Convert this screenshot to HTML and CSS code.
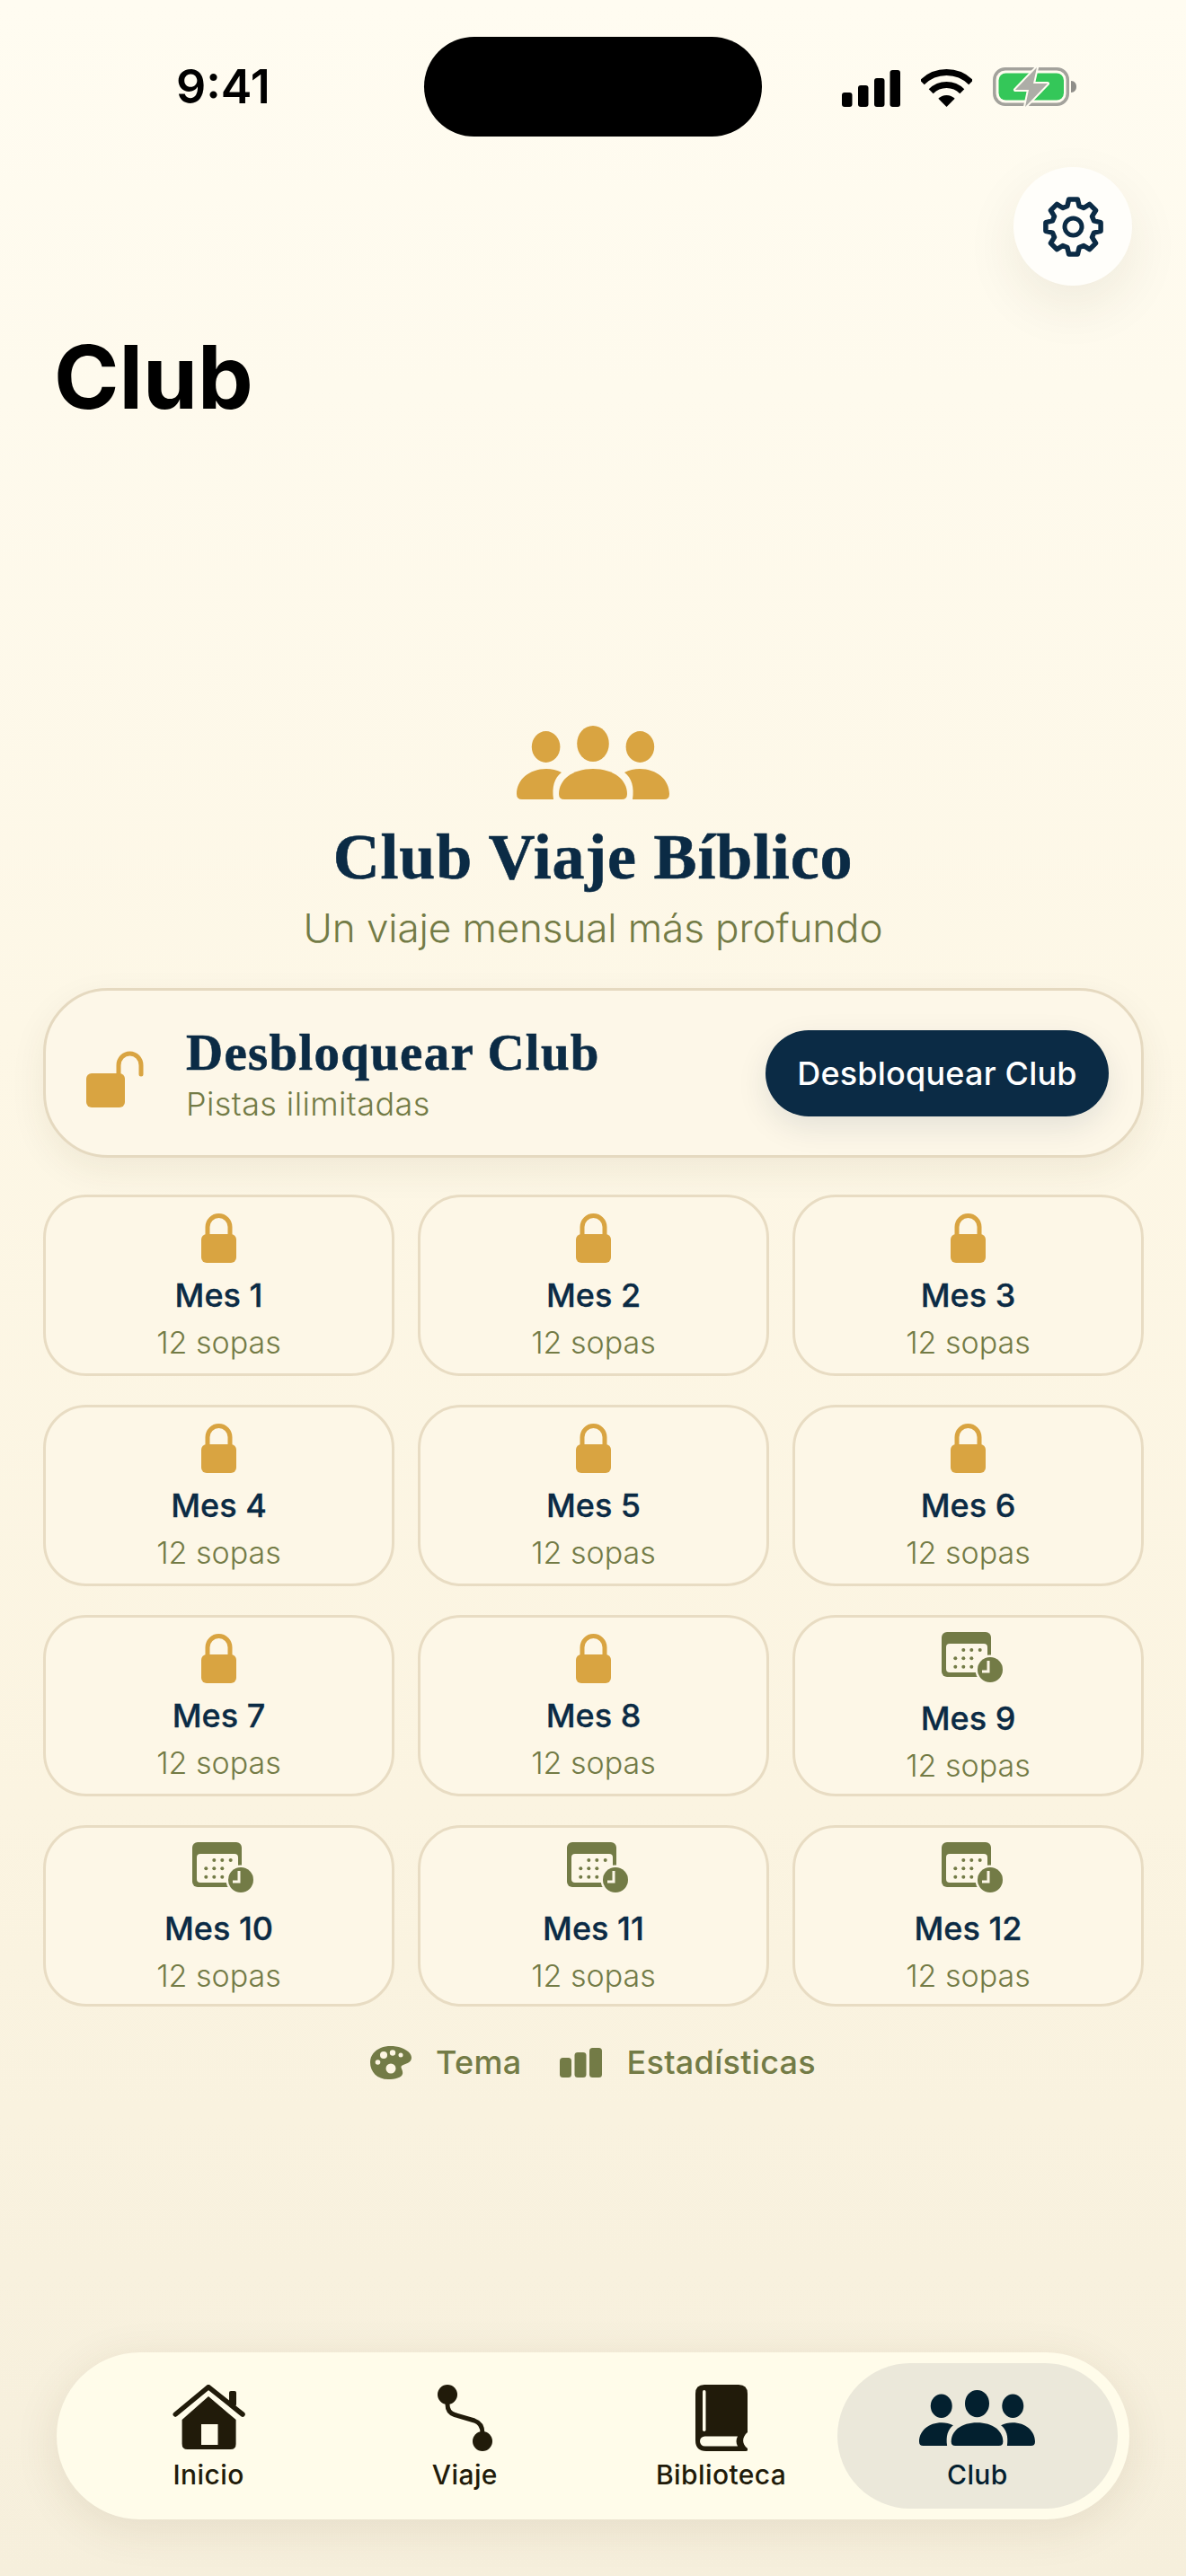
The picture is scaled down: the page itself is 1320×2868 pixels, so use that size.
FILE: index.html
```html
<!DOCTYPE html>
<html lang="es">
<head>
    <meta charset="UTF-8">
    <meta name="viewport" content="width=device-width, initial-scale=1.0">
    <title>Club</title>
    <link rel="stylesheet" href="styles.css">
</head>
<body>
    <svg class="sprite" xmlns="http://www.w3.org/2000/svg">
        <symbol id="group" viewBox="0 0 170 82">
            <ellipse cx="32.6" cy="23.5" rx="15.8" ry="17.4"/>
            <ellipse cx="85" cy="20" rx="17.8" ry="20"/>
            <ellipse cx="137.4" cy="23.5" rx="15.8" ry="17.4"/>
            <path d="M47 76C47 60 62 48 85 48C108 48 123 60 123 76Q123 82 117 82H53Q47 82 47 76Z"/>
            <path d="M0 76C0 60 14 48 33 48C39 48 45 49.5 50 52C42 58 39 68 41 82H6Q0 82 0 76Z"/>
            <path d="M170 76C170 60 156 48 137 48C131 48 125 49.5 120 52C128 58 131 68 129 82H164Q170 82 170 76Z"/>
        </symbol>
        <symbol id="lock" viewBox="0 0 39 55">
            <rect x="0" y="23" width="39" height="32" rx="6"/>
            <path d="M7 25V15A12.5 12.5 0 0 1 32 15V25" fill="none" stroke="#d9a441" stroke-width="5"/>
        </symbol>
        <symbol id="calendar" viewBox="0 0 70 58">
            <rect x="0" y="0" width="55" height="50" rx="6"/>
            <rect x="5" y="13" width="46" height="32" rx="4" fill="#fdf7e7"/>
            <g>
                <circle cx="24.3" cy="20" r="2"/><circle cx="33.3" cy="20" r="2"/><circle cx="42.7" cy="20" r="2"/>
                <circle cx="15.3" cy="29.3" r="2"/><circle cx="24.3" cy="29.3" r="2"/><circle cx="33.3" cy="29.3" r="2"/>
                <circle cx="15.3" cy="38.7" r="2"/><circle cx="24.3" cy="38.7" r="2"/><circle cx="33.3" cy="38.7" r="2"/>
            </g>
            <circle cx="54" cy="42" r="16.5" fill="#fdf7e7"/>
            <circle cx="54" cy="42" r="14"/>
            <path d="M52 32V44H45" fill="none" stroke="#fdf7e7" stroke-width="3"/>
        </symbol>
    </svg>

    <div class="phone">
        <div class="status-bar">
            <div class="time">9:41</div>
            <div class="island"></div>
            <div class="status-icons">
                <svg width="65" height="41" viewBox="0 0 65 41">
                    <rect x="0" y="25" width="11.5" height="16" rx="3"/>
                    <rect x="18" y="17" width="11.5" height="24" rx="3"/>
                    <rect x="36" y="9" width="11.5" height="32" rx="3"/>
                    <rect x="53.5" y="0" width="11.5" height="41" rx="3"/>
                </svg>
                <svg width="57" height="42" viewBox="0 0 57 42">
                    <path d="M1.3 14.8A38.5 38.5 0 0 1 55.7 14.8" fill="none" stroke="#000" stroke-width="7"/>
                    <path d="M11.2 24.7A24.5 24.5 0 0 1 45.8 24.7" fill="none" stroke="#000" stroke-width="7"/>
                    <path d="M28.5 42L19.3 32.8A13 13 0 0 1 37.7 32.8Z"/>
                </svg>
                <svg width="93" height="44" viewBox="0 0 93 44">
                    <rect x="1.8" y="1.8" width="81.5" height="39.5" rx="12" fill="none" stroke="#a3a29c" stroke-width="3.5"/>
                    <path d="M87 15C91 15 93 18 93 21.5C93 25 91 28 87 28Z" fill="#8f8e89"/>
                    <rect x="6.5" y="6.5" width="72.5" height="30" rx="8" fill="#34c759"/>
                    <path d="M49 0L25 25H40L36 44L61 18H45Z" fill="#adada7" stroke="#fffcf1" stroke-width="4" stroke-linejoin="round" paint-order="stroke"/>
                </svg>
            </div>
        </div>

        <div class="settings-row">
            <button class="settings-btn">
                <svg width="69" height="69" viewBox="-34.5 -34.5 69 69">
                    <path d="M-6.6-23.07L-4.85-30.6L4.85-30.6L6.6-23.07L11.65-20.98L18.21-25.07L25.07-18.21L20.98-11.65L23.07-6.6L30.6-4.85L30.6 4.85L23.07 6.6L20.98 11.65L25.07 18.21L18.21 25.07L11.65 20.98L6.6 23.07L4.85 30.6L-4.85 30.6L-6.6 23.07L-11.65 20.98L-18.21 25.07L-25.07 18.21L-20.98 11.65L-23.07 6.6L-30.6 4.85L-30.6-4.85L-23.07-6.6L-20.98-11.65L-25.07-18.21L-18.21-25.07L-11.65-20.98Z" fill="none" stroke="#0b2b45" stroke-width="5.5" stroke-linejoin="round"/>
                    <circle cx="0" cy="0" r="9.5" fill="none" stroke="#0b2b45" stroke-width="5"/>
                </svg>
            </button>
        </div>

        <h1 class="page-title">Club</h1>

        <div class="hero">
            <svg class="hero-icon" width="170" height="82"><use href="#group"/></svg>
            <h2 class="hero-title">Club Viaje Bíblico</h2>
            <p class="hero-sub">Un viaje mensual más profundo</p>
        </div>

        <div class="unlock-card">
            <svg class="unlock-icon" width="66" height="63" viewBox="0 0 66 63">
                <rect x="0" y="25" width="43" height="38" rx="6" fill="#d9a441"/>
                <path d="M36 27V16A12.5 13 0 0 1 61 16V26" fill="none" stroke="#d9a441" stroke-width="5" stroke-linecap="round"/>
            </svg>
            <div class="unlock-text">
                <div class="unlock-title">Desbloquear Club</div>
                <div class="unlock-sub">Pistas ilimitadas</div>
            </div>
            <button class="unlock-btn">Desbloquear Club</button>
        </div>

        <div class="month-grid">
            <div class="month"><svg class="lock-icon"><use href="#lock"/></svg><div class="month-name">Mes 1</div><div class="month-sub">12 sopas</div></div>
            <div class="month"><svg class="lock-icon"><use href="#lock"/></svg><div class="month-name">Mes 2</div><div class="month-sub">12 sopas</div></div>
            <div class="month"><svg class="lock-icon"><use href="#lock"/></svg><div class="month-name">Mes 3</div><div class="month-sub">12 sopas</div></div>
            <div class="month"><svg class="lock-icon"><use href="#lock"/></svg><div class="month-name">Mes 4</div><div class="month-sub">12 sopas</div></div>
            <div class="month"><svg class="lock-icon"><use href="#lock"/></svg><div class="month-name">Mes 5</div><div class="month-sub">12 sopas</div></div>
            <div class="month"><svg class="lock-icon"><use href="#lock"/></svg><div class="month-name">Mes 6</div><div class="month-sub">12 sopas</div></div>
            <div class="month"><svg class="lock-icon"><use href="#lock"/></svg><div class="month-name">Mes 7</div><div class="month-sub">12 sopas</div></div>
            <div class="month"><svg class="lock-icon"><use href="#lock"/></svg><div class="month-name">Mes 8</div><div class="month-sub">12 sopas</div></div>
            <div class="month"><svg class="cal-icon"><use href="#calendar"/></svg><div class="month-name">Mes 9</div><div class="month-sub">12 sopas</div></div>
            <div class="month"><svg class="cal-icon"><use href="#calendar"/></svg><div class="month-name">Mes 10</div><div class="month-sub">12 sopas</div></div>
            <div class="month"><svg class="cal-icon"><use href="#calendar"/></svg><div class="month-name">Mes 11</div><div class="month-sub">12 sopas</div></div>
            <div class="month"><svg class="cal-icon"><use href="#calendar"/></svg><div class="month-name">Mes 12</div><div class="month-sub">12 sopas</div></div>
        </div>

        <div class="links">
            <a class="link">
                <svg width="46" height="37" viewBox="0 0 46 37">
                    <path d="M20 0C32-1 46 5 46 13C46 19 38 20 35 22C33 24 37 27 36 31C35 35 28 37 20 37C8 37 0 29 0 18C0 8 9 1 20 0Z" fill="#737b46"/>
                    <circle cx="15" cy="10" r="4" fill="#fdf5e2"/>
                    <circle cx="25" cy="7.5" r="3.2" fill="#fdf5e2"/>
                    <circle cx="34" cy="10" r="2.5" fill="#fdf5e2"/>
                    <circle cx="8.5" cy="18" r="2.8" fill="#fdf5e2"/>
                    <circle cx="23" cy="25" r="5.5" fill="#fdf5e2"/>
                </svg>
                <span>Tema</span>
            </a>
            <a class="link">
                <svg width="47" height="33" viewBox="0 0 47 33">
                    <rect x="0" y="11" width="13" height="22" rx="3.5" fill="#737b46"/>
                    <rect x="16.5" y="5" width="13" height="28" rx="3.5" fill="#737b46"/>
                    <rect x="33" y="0" width="14" height="33" rx="3.5" fill="#737b46"/>
                </svg>
                <span>Estadísticas</span>
            </a>
        </div>

        <nav class="tab-bar">
            <a class="tab">
                <svg width="81" height="74" viewBox="0 0 81 74">
                    <rect x="63" y="7" width="8" height="17" rx="2" fill="#211b0a"/>
                    <path d="M3.3 33L40 2.6L78 33" fill="none" stroke="#211b0a" stroke-width="5.5" stroke-linecap="round" stroke-linejoin="round"/>
                    <path d="M40 13L70.6 39V66Q70.6 72 64.6 72H16.6Q10.6 72 10.6 66V39Z" fill="#211b0a"/>
                    <rect x="32" y="44" width="18.5" height="23" fill="#fffcea"/>
                </svg>
                <span>Inicio</span>
            </a>
            <a class="tab">
                <svg width="61" height="74" viewBox="0 0 61 74">
                    <circle cx="11" cy="11" r="11" fill="#211b0a"/>
                    <circle cx="50" cy="63" r="11" fill="#211b0a"/>
                    <path d="M11 18V22C11 29 14 32 19 33.5L41 40C47 42 50 46 50 54" fill="none" stroke="#211b0a" stroke-width="5"/>
                </svg>
                <span>Viaje</span>
            </a>
            <a class="tab">
                <svg width="58" height="74" viewBox="0 0 58 74">
                    <path d="M10 0H48Q58 0 58 10V53C52 58 51 66 58 71Q59 74 56 74H12Q0 74 0 62V10Q0 0 10 0Z" fill="#211b0a"/>
                    <rect x="8" y="6" width="3.5" height="46" rx="1.7" fill="#fffcea"/>
                    <path d="M10.5 57.5H47C45 61 45 65 47 68.5H10.5A5.5 5.5 0 0 1 10.5 57.5Z" fill="#fffcea"/>
                </svg>
                <span>Biblioteca</span>
            </a>
            <a class="tab tab-active">
                <svg class="tab-group" width="129" height="62"><use href="#group"/></svg>
                <span>Club</span>
            </a>
        </nav>
    </div>
</body>
</html>
```

FILE: styles.css
```css
* {
    box-sizing: border-box;
}

body {
    margin: 0;
    font-family: Inter, "Noto Sans", sans-serif;
}

.sprite {
    display: none;
}

.phone {
    width: 1320px;
    height: 2868px;
    display: flex;
    flex-direction: column;
    overflow: hidden;
    background: linear-gradient(180deg, #fffcf1 0%, #fefaed 15%, #fdf7e6 40%, #fbf4e1 70%, #f6efdc 100%);
}

/* status bar */
.status-bar {
    display: grid;
    grid-template-columns: 472px 376px 472px;
    height: 111px;
    margin-top: 41px;
    align-items: center;
}

.time {
    padding-left: 196px;
    font-size: 52px;
    font-weight: 600;
    line-height: 1;
    color: #000;
}

.island {
    height: 111px;
    background: #000;
    border-radius: 56px;
}

.status-icons {
    display: flex;
    align-items: flex-end;
    padding-left: 89px;
    gap: 23px;
}

/* header */
.settings-row {
    display: flex;
    justify-content: flex-end;
    padding-right: 60px;
    margin-top: 34px;
}

.settings-btn {
    width: 132px;
    height: 132px;
    border: none;
    padding: 0;
    border-radius: 50%;
    background: #fffefa;
    box-shadow: 0 22px 60px rgba(60, 50, 20, 0.08);
    display: flex;
    align-items: center;
    justify-content: center;
}

.page-title {
    margin: 44px 0 0 60px;
    font-size: 98px;
    font-weight: 700;
    line-height: 116px;
    color: #000;
}

/* hero */
.hero {
    display: flex;
    flex-direction: column;
    align-items: center;
    margin-top: 330px;
}

.hero-icon {
    fill: #d9a441;
}

.hero-title {
    margin: 20px 0 0;
    font-family: "Liberation Serif", serif;
    font-size: 72px;
    font-weight: 700;
    line-height: 88px;
    letter-spacing: 0.8px;
    color: #0b2b45;
    -webkit-text-stroke: 0.6px #0b2b45;
}

.hero-sub {
    margin: 8px 0 0;
    font-size: 44px;
    font-weight: 350;
    line-height: 54px;
    letter-spacing: -0.1px;
    color: #737b46;
}

/* unlock card */
.unlock-card {
    display: flex;
    align-items: center;
    height: 189px;
    margin: 40px 47px 0 48px;
    padding: 0 36px 0 45px;
    background: #fdf7e8;
    border: 3px solid #e5d9c0;
    border-radius: 72px;
    box-shadow: 0 14px 40px rgba(70, 60, 20, 0.07);
}

.unlock-icon {
    margin-top: 14px;
}

.unlock-text {
    margin-left: 45px;
    flex: 1;
}

.unlock-title {
    font-family: "Liberation Serif", serif;
    font-size: 57px;
    font-weight: 700;
    line-height: 64px;
    letter-spacing: 1.25px;
    color: #0b2b45;
    -webkit-text-stroke: 0.6px #0b2b45;
}

.unlock-sub {
    margin-top: 4px;
    font-size: 36px;
    font-weight: 350;
    line-height: 42px;
    letter-spacing: 0.4px;
    color: #737b46;
}

.unlock-btn {
    width: 382px;
    height: 96px;
    border: none;
    border-radius: 48px;
    background: #0b2b45;
    color: #fff;
    font-family: Inter, sans-serif;
    font-size: 36px;
    font-weight: 500;
    letter-spacing: 0.2px;
    box-shadow: 0 12px 34px rgba(11, 43, 69, 0.1);
}

/* months */
.month-grid {
    display: grid;
    grid-template-columns: repeat(3, 391px);
    column-gap: 26px;
    row-gap: 32px;
    margin: 41px 0 0 48px;
}

.month {
    height: 202px;
    display: flex;
    flex-direction: column;
    align-items: center;
    padding-top: 18px;
    background: #fdf7e7;
    border: 3px solid #e8dcc3;
    border-radius: 48px;
}

.lock-icon {
    width: 39px;
    height: 55px;
    margin-bottom: 14px;
    fill: #d9a441;
}

.cal-icon {
    width: 70px;
    height: 58px;
    margin: -2px 0 16px 11px;
    fill: #737b46;
}

.month-name {
    font-size: 36px;
    font-weight: 500;
    line-height: 44px;
    color: #0b2b45;
    -webkit-text-stroke: 0.3px #0b2b45;
}

.month-sub {
    margin-top: 11px;
    font-size: 34px;
    font-weight: 350;
    line-height: 40px;
    color: #737b46;
}

/* links under the grid */
.links {
    display: flex;
    justify-content: center;
    gap: 43px;
    margin-top: 40px;
}

.link {
    display: flex;
    align-items: center;
    gap: 27px;
    font-size: 36px;
    font-weight: 550;
    line-height: 44px;
    letter-spacing: 0.3px;
    color: #737b46;
}

/* tab bar */
.tab-bar {
    display: flex;
    height: 186px;
    margin: auto 63px 63px;
    padding: 12px 13px;
    background: #fffcea;
    border-radius: 93px;
    box-shadow: 0 10px 50px rgba(80, 60, 20, 0.1);
}

.tab {
    flex: 1;
    display: flex;
    flex-direction: column;
    align-items: center;
    padding-top: 24px;
    border-radius: 81px;
    font-size: 30px;
    font-weight: 500;
    line-height: 36px;
    letter-spacing: 0.4px;
    color: #211b0a;
}

.tab + .tab {
    margin-left: -27px;
}

.tab svg {
    height: 74px;
    margin-bottom: 8px;
}

.tab-active {
    background: #ebe8da;
    color: #03202f;
}

.tab-group {
    fill: #03202f;
}
```
